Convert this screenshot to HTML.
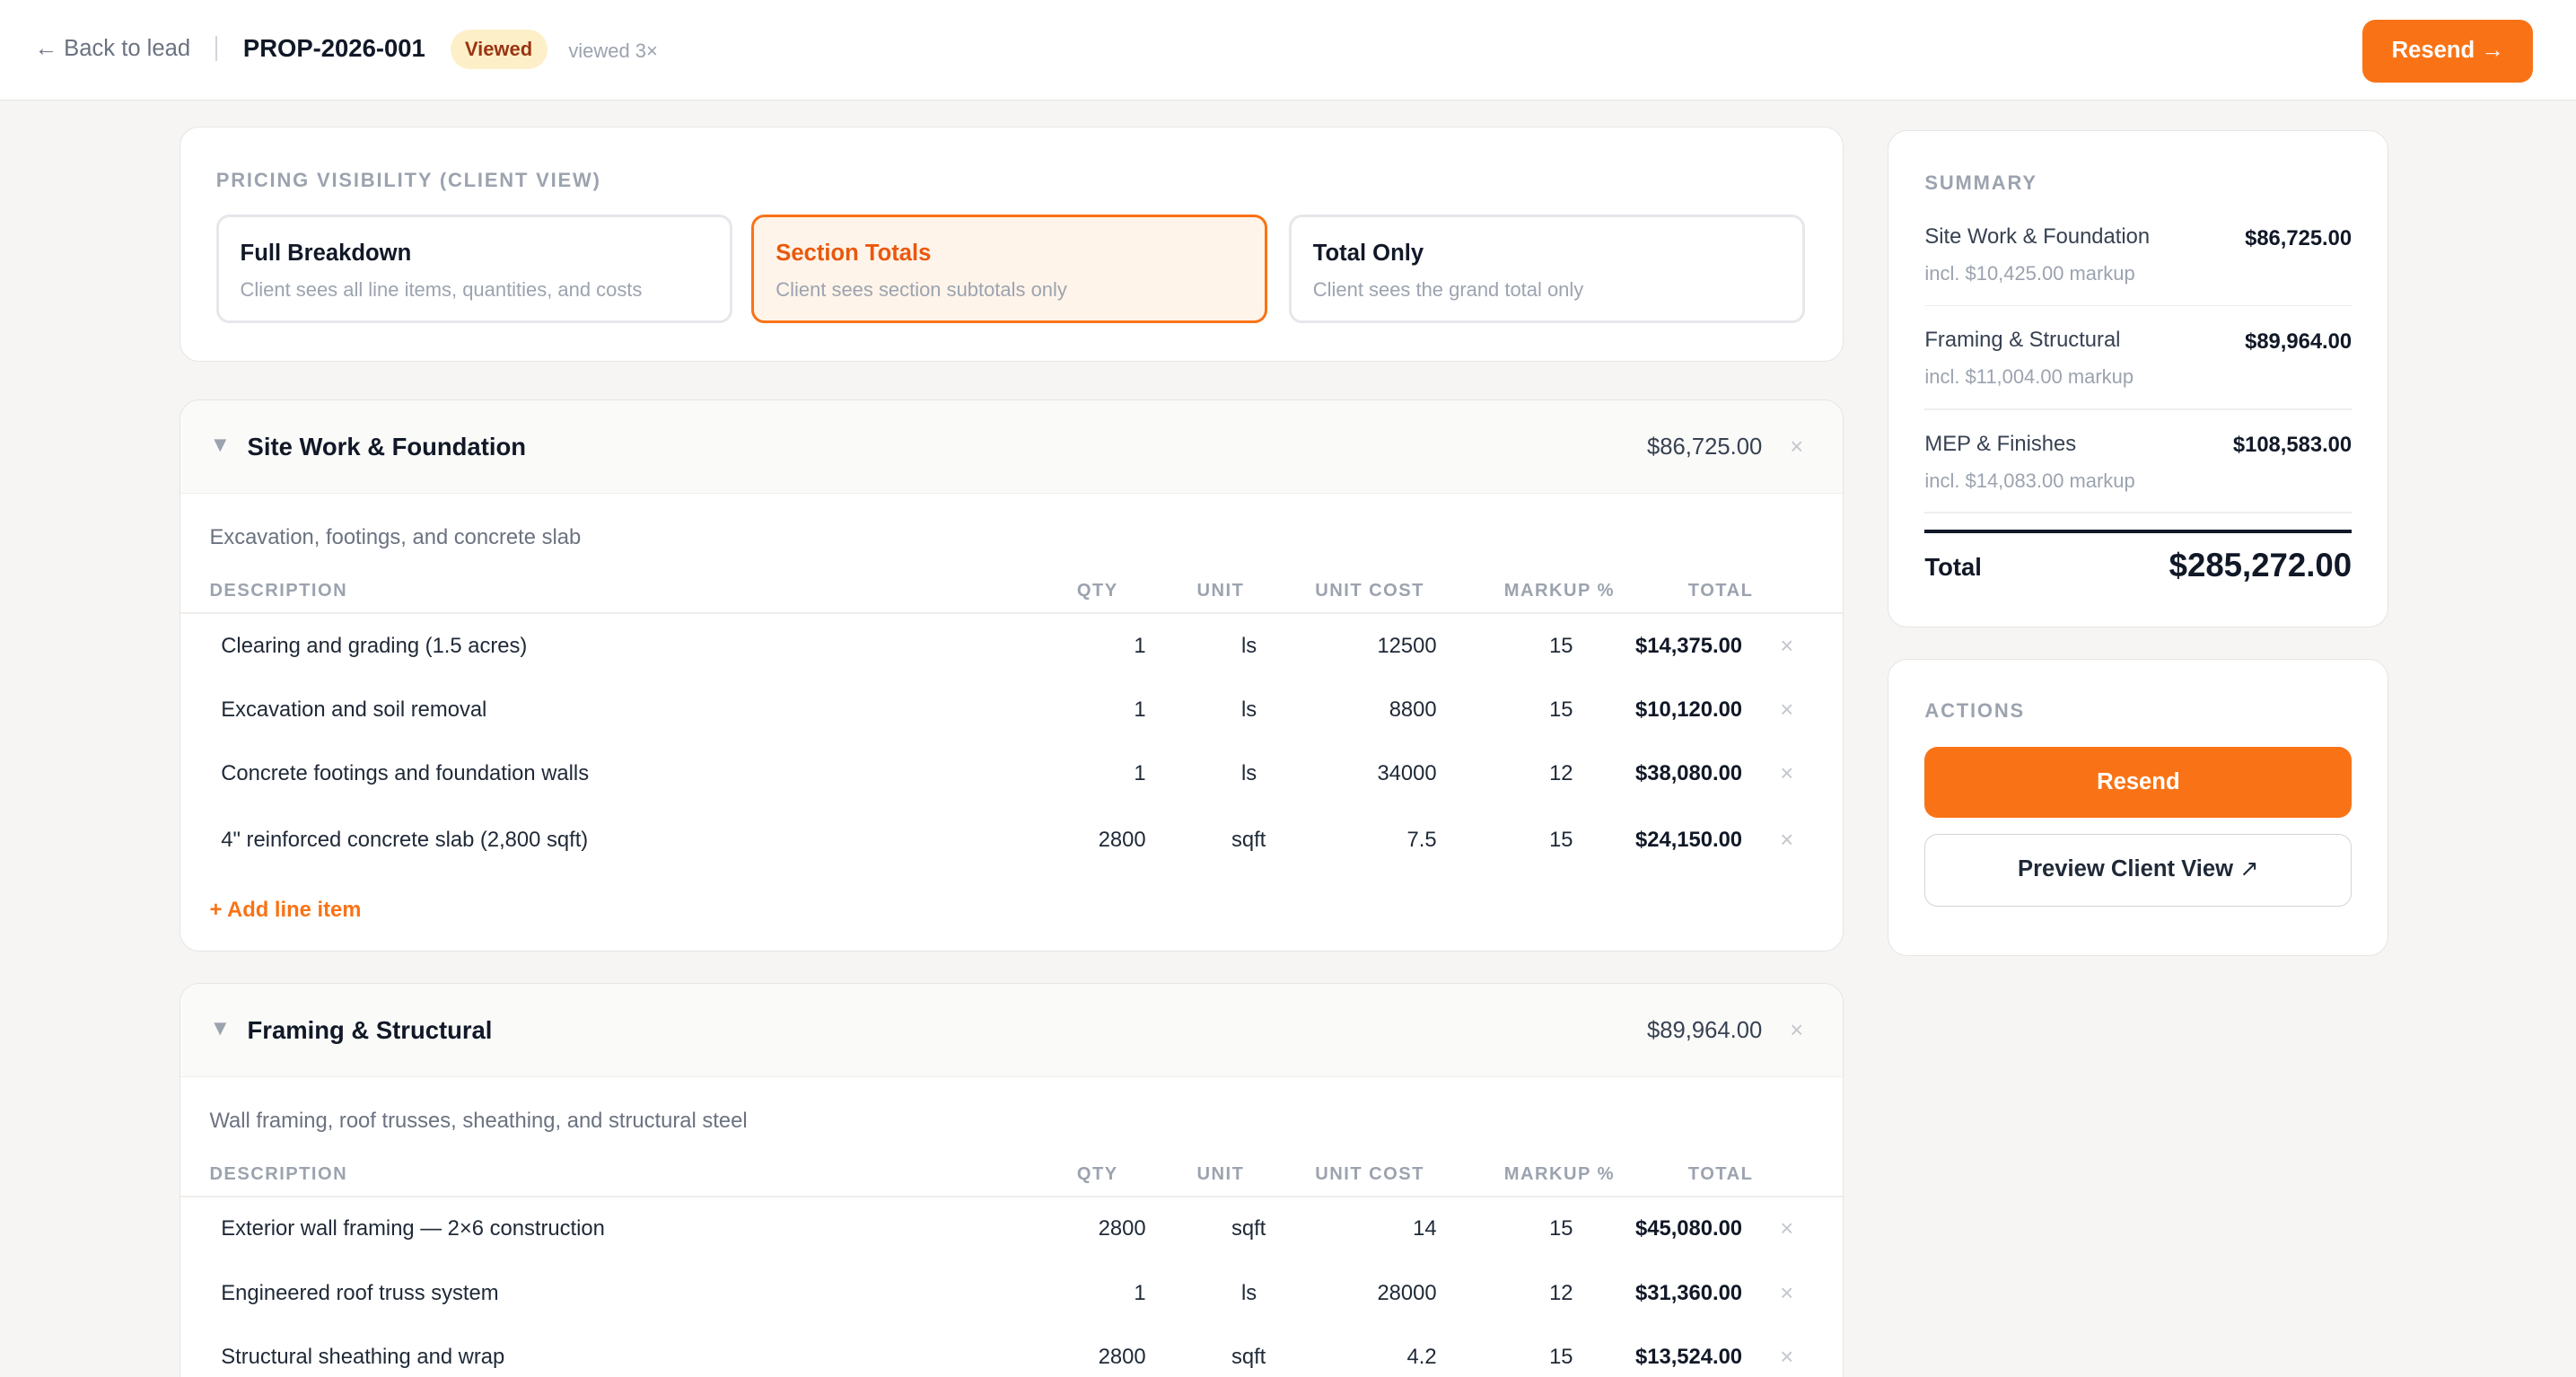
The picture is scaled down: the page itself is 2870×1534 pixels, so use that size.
<!DOCTYPE html>
<html><head><meta charset="utf-8"><style>
*{box-sizing:border-box;margin:0;padding:0}
html,body{width:2870px;height:1534px;overflow:hidden;background:#f6f5f3}
#z{zoom:1.8304;width:1568px;height:838px;position:relative;overflow:hidden;font-family:"Liberation Sans",sans-serif;color:#111827}
.a{position:absolute;white-space:nowrap}
.hdr{position:absolute;left:0;top:0;width:1568px;height:61px;background:#fff;border-bottom:1px solid #e5e5e5}
.card{position:absolute;background:#fff;border:1px solid #e7e5e4;border-radius:12px;overflow:hidden}
.lbl{font-size:12px;letter-spacing:1px;color:#9ca3af;font-weight:bold}
.opt{position:absolute;top:53px;height:66px;width:314px;border:2px solid #e5e7eb;border-radius:8px;padding:14px 13px}
.opt b{display:block;font-size:14px;margin-bottom:4px}
.opt span{font-size:12px;color:#9ca3af}
.sh{position:absolute;left:0;top:0;right:0;height:57px;background:#fafaf9;border-bottom:1px solid #efeeec}
.th{font-size:11px;font-weight:bold;letter-spacing:.8px;color:#9ca3af}
.td{font-size:13px;color:#1f2937}
.r{text-align:right}
.x{color:#c4c7cc;font-size:14px}
</style></head><body><div id="z">
<div class="hdr">
<div class="a" style="left:21px;top:22px;font-size:14px;color:#6b7280">← Back to lead</div>
<div class="a" style="left:131px;top:22px;width:1px;height:15px;background:#d1d5db"></div>
<div class="a" style="left:148px;top:21px;font-size:15px;font-weight:bold">PROP-2026-001</div>
<div class="a" style="left:274px;top:18px;width:59px;height:24px;border-radius:12px;background:#fdefc8;color:#9a3412;font-size:12px;font-weight:bold;text-align:center;line-height:24px">Viewed</div>
<div class="a" style="left:346px;top:24px;font-size:12px;color:#9ca3af">viewed 3×</div>
<div class="a" style="left:1438px;top:12px;width:104px;height:38px;border-radius:8px;background:#f97316;color:#fff;font-size:14px;font-weight:bold;text-align:center;line-height:38px">Resend →</div>
</div>

<div class="card" style="left:109px;top:77px;width:1013px;height:143px">
<div class="a lbl" style="left:22px;top:25px">PRICING VISIBILITY (CLIENT VIEW)</div>
<div class="opt" style="left:22px"><b>Full Breakdown</b><span>Client sees all line items, quantities, and costs</span></div>
<div class="opt" style="left:348px;border-color:#f97316;background:#fff4ea"><b style="color:#ea580c">Section Totals</b><span>Client sees section subtotals only</span></div>
<div class="opt" style="left:675px"><b>Total Only</b><span>Client sees the grand total only</span></div>
</div>

<!-- section 1 -->
<div class="card" style="left:109px;top:243px;width:1013px;height:336px">
<div class="sh"></div>
<div class="a" style="left:18px;top:20px;font-size:13px;color:#9ca3af">▼</div>
<div class="a" style="left:41px;top:20px;font-size:15px;font-weight:bold">Site Work &amp; Foundation</div>
<div class="a" style="left:893px;top:21px;font-size:14px;color:#374151">$86,725.00</div>
<div class="a x" style="left:980px;top:21px">×</div>
<div class="a" style="left:18px;top:76px;font-size:13px;color:#6b7280">Excavation, footings, and concrete slab</div>
<div class="a th" style="left:18px;top:110px">DESCRIPTION</div>
<div class="a th" style="left:546px;top:110px">QTY</div>
<div class="a th" style="left:619px;top:110px">UNIT</div>
<div class="a th" style="left:691px;top:110px">UNIT COST</div>
<div class="a th" style="left:806px;top:110px">MARKUP %</div>
<div class="a th" style="left:918px;top:110px">TOTAL</div>
<div class="a" style="left:0;right:0;top:129px;height:1px;background:#efeeec"></div>
<div class="a td" style="left:25px;top:142px">Clearing and grading (1.5 acres)</div><div class="a td r" style="right:424px;top:142px">1</div><div class="a td" style="left:646px;top:142px">ls</div><div class="a td r" style="right:247px;top:142px">12500</div><div class="a td r" style="right:164px;top:142px">15</div><div class="a td r" style="right:61px;top:142px;font-weight:bold;color:#111827">$14,375.00</div><div class="a x" style="left:974px;top:142px">×</div>
<div class="a td" style="left:25px;top:181px">Excavation and soil removal</div><div class="a td r" style="right:424px;top:181px">1</div><div class="a td" style="left:646px;top:181px">ls</div><div class="a td r" style="right:247px;top:181px">8800</div><div class="a td r" style="right:164px;top:181px">15</div><div class="a td r" style="right:61px;top:181px;font-weight:bold;color:#111827">$10,120.00</div><div class="a x" style="left:974px;top:181px">×</div>
<div class="a td" style="left:25px;top:220px">Concrete footings and foundation walls</div><div class="a td r" style="right:424px;top:220px">1</div><div class="a td" style="left:646px;top:220px">ls</div><div class="a td r" style="right:247px;top:220px">34000</div><div class="a td r" style="right:164px;top:220px">12</div><div class="a td r" style="right:61px;top:220px;font-weight:bold;color:#111827">$38,080.00</div><div class="a x" style="left:974px;top:220px">×</div>
<div class="a td" style="left:25px;top:260px">4" reinforced concrete slab (2,800 sqft)</div><div class="a td r" style="right:424px;top:260px">2800</div><div class="a td" style="left:640px;top:260px">sqft</div><div class="a td r" style="right:247px;top:260px">7.5</div><div class="a td r" style="right:164px;top:260px">15</div><div class="a td r" style="right:61px;top:260px;font-weight:bold;color:#111827">$24,150.00</div><div class="a x" style="left:974px;top:260px">×</div>
<div class="a" style="left:18px;top:303px;font-size:13px;font-weight:bold;color:#f97316">+ Add line item</div>
</div>

<!-- section 2 -->
<div class="card" style="left:109px;top:598px;width:1013px;height:260px">
<div class="sh"></div>
<div class="a" style="left:18px;top:20px;font-size:13px;color:#9ca3af">▼</div>
<div class="a" style="left:41px;top:20px;font-size:15px;font-weight:bold">Framing &amp; Structural</div>
<div class="a" style="left:893px;top:21px;font-size:14px;color:#374151">$89,964.00</div>
<div class="a x" style="left:980px;top:21px">×</div>
<div class="a" style="left:18px;top:76px;font-size:13px;color:#6b7280">Wall framing, roof trusses, sheathing, and structural steel</div>
<div class="a th" style="left:18px;top:110px">DESCRIPTION</div>
<div class="a th" style="left:546px;top:110px">QTY</div>
<div class="a th" style="left:619px;top:110px">UNIT</div>
<div class="a th" style="left:691px;top:110px">UNIT COST</div>
<div class="a th" style="left:806px;top:110px">MARKUP %</div>
<div class="a th" style="left:918px;top:110px">TOTAL</div>
<div class="a" style="left:0;right:0;top:129px;height:1px;background:#efeeec"></div>
<div class="a td" style="left:25px;top:142px">Exterior wall framing — 2×6 construction</div><div class="a td r" style="right:424px;top:142px">2800</div><div class="a td" style="left:640px;top:142px">sqft</div><div class="a td r" style="right:247px;top:142px">14</div><div class="a td r" style="right:164px;top:142px">15</div><div class="a td r" style="right:61px;top:142px;font-weight:bold;color:#111827">$45,080.00</div><div class="a x" style="left:974px;top:142px">×</div>
<div class="a td" style="left:25px;top:181px">Engineered roof truss system</div><div class="a td r" style="right:424px;top:181px">1</div><div class="a td" style="left:646px;top:181px">ls</div><div class="a td r" style="right:247px;top:181px">28000</div><div class="a td r" style="right:164px;top:181px">12</div><div class="a td r" style="right:61px;top:181px;font-weight:bold;color:#111827">$31,360.00</div><div class="a x" style="left:974px;top:181px">×</div>
<div class="a td" style="left:25px;top:220px">Structural sheathing and wrap</div><div class="a td r" style="right:424px;top:220px">2800</div><div class="a td" style="left:640px;top:220px">sqft</div><div class="a td r" style="right:247px;top:220px">4.2</div><div class="a td r" style="right:164px;top:220px">15</div><div class="a td r" style="right:61px;top:220px;font-weight:bold;color:#111827">$13,524.00</div><div class="a x" style="left:974px;top:220px">×</div>
</div>

<!-- summary -->
<div class="card" style="left:1149px;top:79px;width:305px;height:303px">
<div class="a lbl" style="left:22px;top:25px">SUMMARY</div>
<div class="a" style="left:22px;top:57px;font-size:13px;color:#374151">Site Work &amp; Foundation</div>
<div class="a" style="right:22px;top:58px;font-size:13px;font-weight:bold">$86,725.00</div>
<div class="a" style="left:22px;top:80px;font-size:12px;color:#9ca3af">incl. $10,425.00 markup</div>
<div class="a" style="left:22px;right:22px;top:106px;height:1px;background:#efeeec"></div>
<div class="a" style="left:22px;top:120px;font-size:13px;color:#374151">Framing &amp; Structural</div>
<div class="a" style="right:22px;top:121px;font-size:13px;font-weight:bold">$89,964.00</div>
<div class="a" style="left:22px;top:143px;font-size:12px;color:#9ca3af">incl. $11,004.00 markup</div>
<div class="a" style="left:22px;right:22px;top:169px;height:1px;background:#efeeec"></div>
<div class="a" style="left:22px;top:183px;font-size:13px;color:#374151">MEP &amp; Finishes</div>
<div class="a" style="right:22px;top:184px;font-size:13px;font-weight:bold">$108,583.00</div>
<div class="a" style="left:22px;top:206px;font-size:12px;color:#9ca3af">incl. $14,083.00 markup</div>
<div class="a" style="left:22px;right:22px;top:232px;height:1px;background:#efeeec"></div>
<div class="a" style="left:22px;right:22px;top:243px;height:2px;background:#111827"></div>
<div class="a" style="left:22px;top:257px;font-size:15px;font-weight:bold">Total</div>
<div class="a" style="right:22px;top:253px;font-size:20px;font-weight:bold">$285,272.00</div>
</div>

<div class="card" style="left:1149px;top:401px;width:305px;height:181px">
<div class="a lbl" style="left:22px;top:24px">ACTIONS</div>
<div class="a" style="left:22px;top:53px;width:260px;height:43px;border-radius:8px;background:#f97316;color:#fff;font-size:14px;font-weight:bold;text-align:center;line-height:43px">Resend</div>
<div class="a" style="left:22px;top:106px;width:260px;height:44px;border-radius:8px;border:1px solid #d6d3d1;color:#1f2937;font-size:14px;font-weight:bold;text-align:center;line-height:42px">Preview Client View <span style="font-weight:normal">↗</span></div>
</div>
</div></body></html>
